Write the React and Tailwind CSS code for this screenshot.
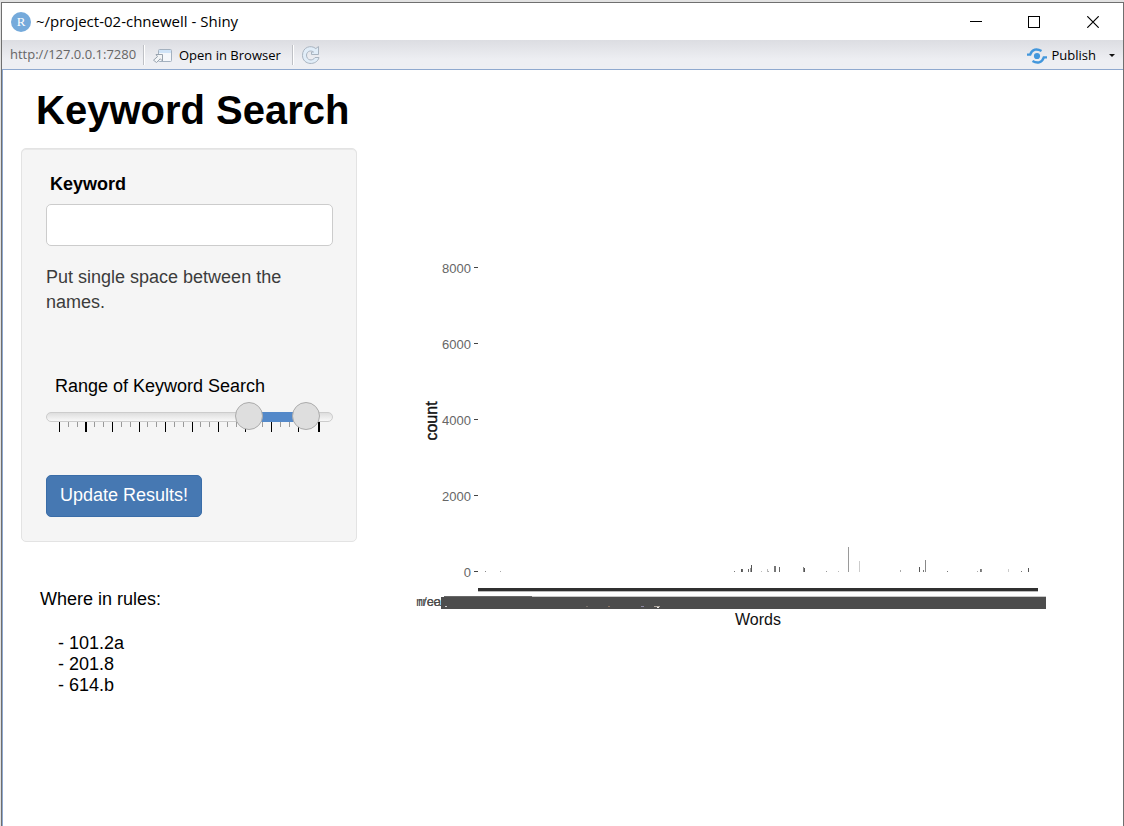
import React, { useState } from "react";

const yTicks = [
  [8000, 10], [6000, 86], [4000, 162], [2000, 238], [0, 314],
];

// [x, height, colour] of each visible count bar
const bars = [
  [71, 1, "#888888"], [86, 1, "#aaaaaa"], [320, 1, "#777777"], [327, 3, "#555555"], [328, 3, "#666666"],
  [334, 3, "#666666"], [336, 4, "#999999"], [337, 7, "#555555"], [347, 1, "#bbbbbb"], [353, 3, "#bbbbbb"],
  [354, 1, "#aaaaaa"], [360, 6, "#777777"], [361, 6, "#777777"], [365, 5, "#666666"], [389, 5, "#888888"],
  [390, 4, "#555555"], [412, 1, "#999999"], [424, 1, "#bbbbbb"], [434, 25, "#9a9a9a"], [445, 11, "#cccccc"],
  [486, 2, "#aaaaaa"], [505, 5, "#555555"], [509, 2, "#777777"], [511, 12, "#888888"], [533, 1, "#777777"],
  [563, 1, "#aaaaaa"], [566, 3, "#777777"], [567, 3, "#888888"], [594, 3, "#cccccc"], [607, 1, "#777777"],
  [614, 4, "#555555"],
];

const majorTicks = [13, 39, 66, 93, 119, 146, 172, 199, 225, 252, 272];
const minorTicks = [22, 31, 48, 57, 75, 84, 101, 110, 128, 137, 154, 163, 181, 190, 207, 216, 234, 243, 261];

function ShinyLogo() {
  return (
    <svg className="size-5 shrink-0" viewBox="0 0 20 20" aria-hidden="true">
      <circle cx="10" cy="10" r="10" fill="#75aadb" />
      <text x="10" y="14" textAnchor="middle" fontFamily="Liberation Serif, serif" fontSize="13" fill="#ffffff">R</text>
    </svg>
  );
}

function OpenIcon() {
  return (
    <svg className="h-4 w-5 shrink-0" viewBox="0 0 20 16" aria-hidden="true">
      <rect x="5.5" y="1.500" width="13" height="12" rx="1" fill="#f4f7fb" stroke="#a4b1bf" />
      <path d="M6 2h12v3H6z" fill="#cfe3f7" />
      <path d="M3 6.500h6.500v6.500l-2.200-2.200L3.500 14.500.500 12.200l4-3.600z" fill="#f2f4f6" stroke="#98a3ae" strokeLinejoin="round" />
    </svg>
  );
}

function RefreshIcon() {
  return (
    <svg className="size-5 shrink-0" viewBox="0 0 20 20" aria-hidden="true">
      <path
        d="M17.500 1.500v8H10.500v-2.500h2C10.500 5.300 6 5.500 5.500 10c0 5.500 6 6.500 8.500 2.500h4C16 21 1.500 20.500 1.500 10.300 1.500 2 10-.500 14.800 3.600z"
        fill="#e1edf8" stroke="#a9b4c0" strokeLinejoin="round"
      />
    </svg>
  );
}

function PublishIcon() {
  return (
    <svg className="h-4 w-5 shrink-0" viewBox="0 0 20 16" fill="none" aria-hidden="true">
      <circle cx="10" cy="8" r="3.100" fill="#4397dc" />
      <path d="M0 6.600h3.200C5 1 10 .300 14.500 3" stroke="#4397dc" strokeWidth="2.400" />
      <path d="M20 9.400h-3.200C15 15 10 15.700 5.500 13" stroke="#4397dc" strokeWidth="2.400" />
    </svg>
  );
}

function TitleBar() {
  return (
    <header className="flex h-[37px] items-center bg-white pl-[9px] font-['Open_Sans',sans-serif] text-[15px] text-black">
      <ShinyLogo />
      <span className="ml-[5px] flex-1 whitespace-nowrap">~/project-02-chnewell - Shiny</span>
      <button type="button" aria-label="Minimize" className="flex h-full w-[58px] items-center justify-center">
        <svg className="size-3" viewBox="0 0 12 12" shapeRendering="crispEdges"><path d="M0 5.500h12" stroke="#000" /></svg>
      </button>
      <button type="button" aria-label="Maximize" className="flex h-full w-[58px] items-center justify-center">
        <svg className="size-3" viewBox="0 0 12 12" shapeRendering="crispEdges"><path d="M.500.500h11v11H.500z" fill="none" stroke="#000" /></svg>
      </button>
      <button type="button" aria-label="Close" className="flex h-full w-[60px] items-center justify-center">
        <svg className="size-3" viewBox="0 0 12 12"><path d="M.300.300l11.400 11.400M11.700.300L.300 11.700" stroke="#000" strokeWidth="1.200" /></svg>
      </button>
    </header>
  );
}

function Toolbar() {
  return (
    <nav className="flex h-[30px] items-center border-b border-[#8fa9cf] bg-linear-to-b from-[#dcdde2] to-[#eeeff3] to-70% pl-2 font-['Open_Sans',sans-serif] text-[13px] text-black">
      <span className="w-[133px] whitespace-nowrap text-[#666]">http://127.0.0.1:7280</span>
      <i className="h-5 w-[2px] border-l border-[#bfc1c6] bg-white" />
      <button type="button" className="ml-2 flex items-center gap-[6px] pt-[2px] whitespace-nowrap">
        <OpenIcon />
        Open in Browser
      </button>
      <i className="ml-[11px] h-5 w-[2px] border-l border-[#bfc1c6] bg-white" />
      <button type="button" aria-label="Reload" className="ml-[7px] flex-none"><RefreshIcon /></button>
      <button type="button" className="ml-auto flex items-center gap-[5px] pt-[2px]">
        <PublishIcon />
        Publish
      </button>
      <button type="button" aria-label="Publish options" className="flex w-[27px] items-center justify-center pt-[2px] pl-1">
        <svg className="h-[3px] w-[6px]" viewBox="0 0 6 3"><path d="M0 0h6L3 3z" fill="#111" /></svg>
      </button>
    </nav>
  );
}

const thumb =
  "pointer-events-none absolute inset-x-0 top-0 h-7 w-full appearance-none bg-transparent [&::-webkit-slider-thumb]:pointer-events-auto [&::-webkit-slider-thumb]:size-7 [&::-webkit-slider-thumb]:appearance-none [&::-webkit-slider-thumb]:rounded-full [&::-webkit-slider-thumb]:border [&::-webkit-slider-thumb]:border-[#ababab] [&::-webkit-slider-thumb]:bg-[#dedede]";

function RangeSlider() {
  const [low, setLow] = useState(73);
  const [high, setHigh] = useState(95);
  return (
    <div className="relative h-8" role="group" aria-labelledby="range-label">
      <div className="pt-[10px]">
        <div className="h-[10px] rounded-full border border-[#ccc] bg-linear-to-b from-[#dedede] to-[#f8f8f8] px-[13px]">
          <div className="-mt-px h-[10px] bg-[#5489c9]" style={{ marginLeft: `${low}%`, width: `${high - low}%` }} />
        </div>
        <svg className="h-[10px] w-full" viewBox="0 0 287 10" preserveAspectRatio="none" shapeRendering="crispEdges" aria-hidden="true">
          {minorTicks.map((x) => <rect key={x} x={x} y="0" width="1" height="5" fill="#999999" />)}
          {majorTicks.map((x) => <rect key={x} x={x} y="0" width={x === 39 || x === 272 ? 2 : 1} height="10" fill="#000000" />)}
        </svg>
      </div>
      <input type="range" min="0" max="100" aria-label="Range start" value={low} onChange={(e) => setLow(Math.min(+e.target.value, high))} className={thumb} />
      <input type="range" min="0" max="100" aria-label="Range end" value={high} onChange={(e) => setHigh(Math.max(+e.target.value, low))} className={thumb} />
    </div>
  );
}

function SearchPanel() {
  return (
    <form onSubmit={(e) => e.preventDefault()} className="rounded-[5px] border border-[#e3e3e3] bg-[#f5f5f5] pt-[23px] pr-[23px] pb-6 pl-6 text-lg leading-[25px] inset-shadow-2xs">
      <label htmlFor="keyword" className="block pl-1 font-bold text-black">Keyword</label>
      <input id="keyword" type="text" className="mt-[7px] block h-[42px] w-full rounded-[5px] border border-[#ccc] bg-white px-4" />
      <p className="mt-[19px] text-[#3c3c3c]">Put single space between the names.</p>
      <div id="range-label" className="mt-[59px] mb-[3px] pl-[9px] text-black">Range of Keyword Search</div>
      <RangeSlider />
      <button type="submit" className="mt-[41px] block h-[42px] rounded-[5px] border border-[#3a6da8] bg-[#4678b2] px-[13px] pb-[2px] text-white">Update Results!</button>
    </form>
  );
}

function WordChart() {
  return (
    <svg className="w-full" viewBox="0 0 632 372" fontFamily="Liberation Sans, Arial, sans-serif" role="img" aria-label="Count of words">
      <g fontSize="13" fill="#666666" textAnchor="end">
        {yTicks.map(([v, y]) => <text key={v} x="57" y={y + 5}>{v}</text>)}
      </g>
      <g shapeRendering="crispEdges">
        {yTicks.map(([v, y]) => <rect key={v} x="60" y={y - 1} width="4" height="1" fill="#444444" />)}
        {bars.map(([x, h, c]) => <rect key={x} x={x} y={314 - h} width="1" height={h} fill={c} />)}
        <rect x="64" y="330" width="560" height="3" fill="#303030" />
        <rect x="64" y="333" width="560" height="1" fill="#bbbbbb" />
      </g>
      <g fontSize="13" fill="#4d4d4d">
        <text x="2" y="348">n/cen</text>
        <text x="4" y="348">rreali</text>
      </g>
      <g shapeRendering="crispEdges">
        <rect x="30" y="338" width="88" height="2" fill="#686868" />
        <rect x="118" y="338" width="514" height="1" fill="#c8c8c8" />
        <rect x="27" y="339" width="605" height="12" fill="#4d4d4d" />
        <rect x="31" y="348" width="2" height="1" fill="#cccccc" />
        <rect x="172" y="348" width="2" height="1" fill="#77706a" />
        <rect x="194" y="348" width="2" height="1" fill="#8c7464" />
        <rect x="227" y="348" width="3" height="1" fill="#8c88a0" />
        <rect x="240" y="348" width="6" height="1" fill="#b0a8a0" />
        <rect x="243" y="349" width="2" height="1" fill="#eeeeee" />
      </g>
      <g fontSize="16" fill="#111111" textAnchor="middle">
        <text transform="translate(23 163) rotate(-90)" stroke="#111111" strokeWidth=".4">count</text>
        <text x="344" y="367">Words</text>
      </g>
    </svg>
  );
}

export default function App() {
  return (
    <div className="min-h-screen border-t-2 border-l border-[#e2e2e2] bg-white font-['Liberation_Sans',Arial,sans-serif]">
      <div className="flex min-h-[calc(100vh-2px)] flex-col border-x border-t border-[#6f6f6f]">
        <TitleBar />
        <Toolbar />
        <main className="flex-1 border-l border-[#8fa9cf] pl-[18px] text-black">
          <h1 className="pt-4 pl-[15px] text-[40px] leading-12 font-bold">Keyword Search</h1>
          <div className="mt-[14px] flex items-start">
            <div className="w-84 shrink-0">
              <SearchPanel />
              <section className="mt-[45px] pl-[19px] text-lg leading-[25px]">
                <h2>Where in rules:</h2>
                <ul className="mt-[21px] pl-[18px] leading-[21px]">
                  <li>- 101.2a</li>
                  <li>- 201.8</li>
                  <li>- 614.b</li>
                </ul>
              </section>
            </div>
            <div className="min-w-0 flex-1 pt-[110px] pr-[77px] pl-[57px]">
              <WordChart />
            </div>
          </div>
        </main>
      </div>
    </div>
  );
}
